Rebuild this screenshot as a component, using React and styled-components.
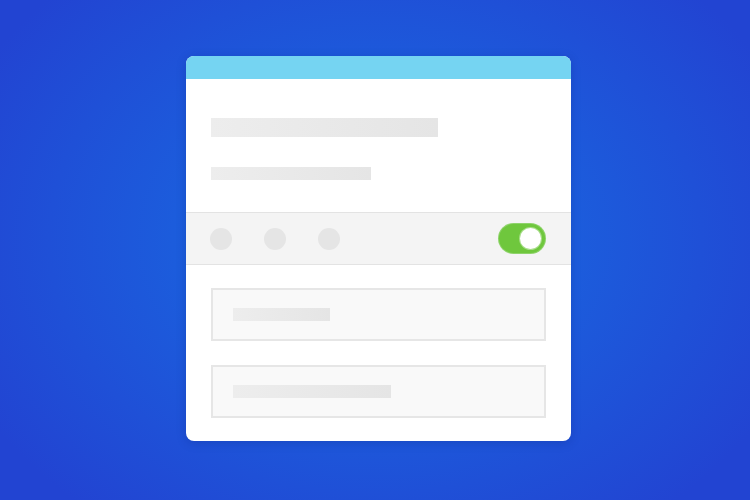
import styled, { createGlobalStyle } from "styled-components";

const GlobalStyle = createGlobalStyle`
  * { box-sizing: border-box; }
  html, body { margin: 0; padding: 0; }
  body { font-family: "Liberation Sans", Arial, sans-serif; }
`;

const Stage = styled.div`
  width: 750px;
  height: 500px;
  display: flex;
  align-items: center;
  justify-content: center;
  padding: 0 0 3px 7px;
  background: radial-gradient(ellipse 60% 70% at 50% 48%, #1a6be2 0%, #1c5cdc 45%, #2244d2 100%);
  overflow: hidden;
`;

const Card = styled.div`
  width: 385px;
  height: 385px;
  background: #ffffff;
  border-radius: 8px;
  overflow: hidden;
  box-shadow: 0 2px 10px rgba(10, 30, 120, 0.25);
  display: flex;
  flex-direction: column;
`;

const Header = styled.div`
  height: 23px;
  background: #75d4f2;
  flex: 0 0 auto;
`;

const Intro = styled.div`
  padding: 39px 25px 32px;
  display: flex;
  flex-direction: column;
  gap: 30px;
`;

const Bar = styled.div`
  width: ${({ $w }) => $w}px;
  height: ${({ $h }) => $h}px;
  background: linear-gradient(90deg, #ededed 0%, #e5e5e5 100%);
`;

const ControlRow = styled.div`
  height: 53px;
  background: #f4f4f4;
  border-top: 1px solid #e3e3e3;
  border-bottom: 1px solid #e3e3e3;
  display: flex;
  align-items: center;
  padding: 0 26px 0 24px;
`;

const Dots = styled.div`
  display: flex;
  gap: 32px;
  flex: 1;
`;

const Dot = styled.span`
  width: 22px;
  height: 22px;
  border-radius: 50%;
  background: #e5e5e5;
`;

const Toggle = styled.div`
  width: 46px;
  height: 29px;
  border-radius: 15px;
  background: #6fc73d;
  display: flex;
  align-items: center;
  justify-content: flex-end;
  padding-right: 4px;
  box-shadow: 0 0 0 1px #8ed36a;
`;

const Knob = styled.span`
  width: 21px;
  height: 21px;
  border-radius: 50%;
  background: #ffffff;
  box-shadow: 0 0 0 1px #a8dd8a;
`;

const Fields = styled.div`
  padding: 23px 25px 23px;
  display: flex;
  flex-direction: column;
  gap: 24px;
`;

const Field = styled.div`
  width: 335px;
  height: 53px;
  background: #f9f9f9;
  border: 2px solid #e6e6e6;
  display: flex;
  align-items: center;
  padding-left: 20px;
`;

export default function App() {
  return (
    <>
      <GlobalStyle />
      <Stage>
        <Card>
          <Header />
          <Intro>
            <Bar $w={227} $h={19} />
            <Bar $w={160} $h={13} />
          </Intro>
          <ControlRow>
            <Dots>
              <Dot />
              <Dot />
              <Dot />
            </Dots>
            <Toggle>
              <Knob />
            </Toggle>
          </ControlRow>
          <Fields>
            <Field>
              <Bar $w={97} $h={13} />
            </Field>
            <Field>
              <Bar $w={158} $h={13} />
            </Field>
          </Fields>
        </Card>
      </Stage>
    </>
  );
}
